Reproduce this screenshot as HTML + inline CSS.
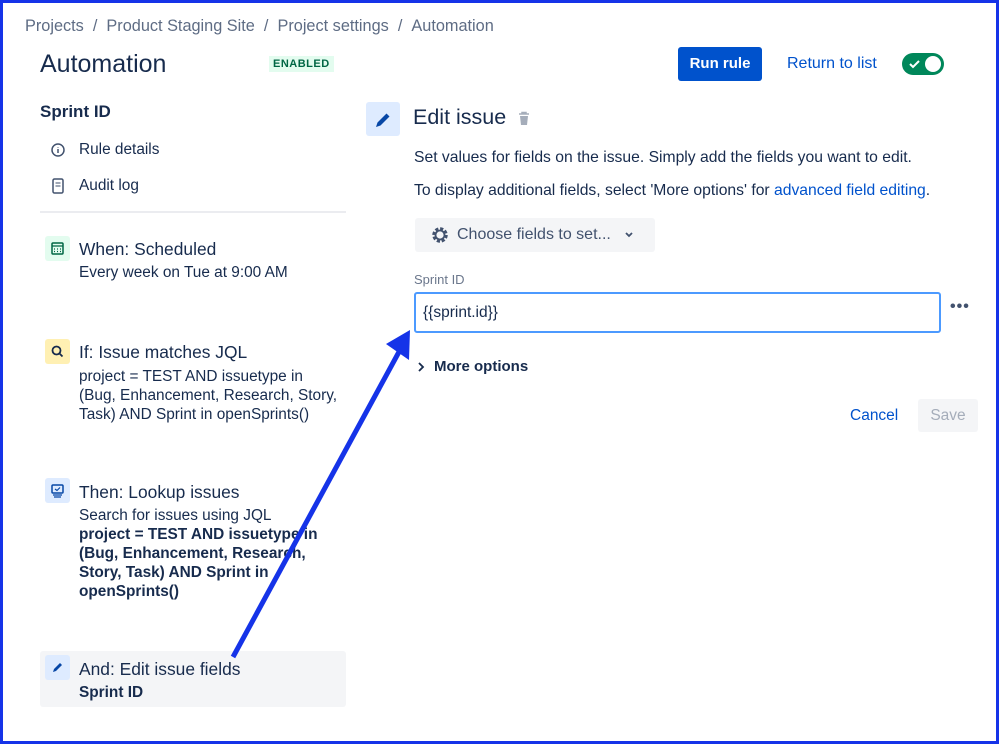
<!DOCTYPE html>
<html><head><style>
*{margin:0;padding:0;box-sizing:border-box}
body{width:999px;height:744px;overflow:hidden;background:#fff;font-family:"Liberation Sans",sans-serif;color:#172b4d;position:relative}
.frame{position:absolute;left:0;top:0;width:999px;height:744px;border:3px solid #1533e8}
.a{position:absolute;white-space:nowrap}
.ic{position:absolute;width:25px;height:25px;border-radius:3px}
</style></head><body>
<div class="frame"></div>
<div class="a" style="left:25px;top:17px;font-size:16.3px;color:#5e6c84">Projects &nbsp;/ &nbsp;Product Staging Site &nbsp;/ &nbsp;Project settings &nbsp;/ &nbsp;Automation</div>
<div class="a" style="left:40px;top:50px;font-size:25px;color:#172b4d">Automation</div>
<div class="a" style="left:269px;top:56px;background:#e3fcef;color:#006644;font-size:11px;font-weight:bold;padding:2px 4px;letter-spacing:.5px">ENABLED</div>
<div class="a" style="left:678px;top:47px;width:84px;height:34px;background:#0052cc;color:#fff;border-radius:3px;font-size:15px;font-weight:bold;text-align:center;line-height:34px">Run rule</div>
<div class="a" style="left:787px;top:55px;font-size:16px;color:#0052cc">Return to list</div>
<div class="a" style="left:902px;top:53px;width:42px;height:22px;border-radius:11px;background:#00875a"><svg width="42" height="22"><path d="M8 11l3 3 6-6" stroke="#fff" stroke-width="2" fill="none"/><circle cx="31" cy="11" r="8" fill="#fff"/></svg></div>

<div class="a" style="left:40px;top:102px;font-size:17px;font-weight:bold">Sprint ID</div>
<svg class="a" style="left:50px;top:142px" width="16" height="16"><circle cx="8" cy="8" r="6" fill="none" stroke="#42526e" stroke-width="1.5"/><path d="M8 7v4M8 5v.5" stroke="#42526e" stroke-width="1.5"/></svg>
<div class="a" style="left:79px;top:141px;font-size:15.4px">Rule details</div>
<svg class="a" style="left:52px;top:178px" width="12" height="16"><rect x="1" y="1" width="10" height="14" rx="1.5" fill="none" stroke="#42526e" stroke-width="1.5"/><path d="M3.5 5h5M3.5 8h5" stroke="#42526e"/></svg>
<div class="a" style="left:79px;top:177px;font-size:15.4px">Audit log</div>
<div class="a" style="left:40px;top:211px;width:306px;height:2px;background:#ebecf0"></div>

<div class="ic" style="left:45px;top:236px;background:#e3fcef"><svg width="25" height="25"><rect x="7" y="7" width="11" height="11" rx="1" fill="none" stroke="#006644" stroke-width="1.5"/><path d="M7 10h11M9 13h1M12 13h1M15 13h1M9 15.5h1M12 15.5h1M15 15.5h1" stroke="#006644" stroke-width="1.3"/></svg></div>
<div class="a" style="left:79px;top:239px;font-size:17.4px">When: Scheduled</div>
<div class="a" style="left:79px;top:264px;font-size:15.4px">Every week on Tue at 9:00 AM</div>

<div class="ic" style="left:45px;top:339px;background:#fff0b3"><svg width="25" height="25"><circle cx="11.5" cy="11.5" r="4" fill="none" stroke="#172b4d" stroke-width="1.8"/><path d="M14.5 14.5l3 3" stroke="#172b4d" stroke-width="1.8"/></svg></div>
<div class="a" style="left:79px;top:342px;font-size:17.4px">If: Issue matches JQL</div>
<div class="a" style="left:79px;top:367px;font-size:15.4px;line-height:19px">project = TEST AND issuetype in<br>(Bug, Enhancement, Research, Story,<br>Task) AND Sprint in openSprints()</div>

<div class="ic" style="left:45px;top:478px;background:#deebff"><svg width="25" height="25"><rect x="7" y="7" width="11" height="8" rx="1" fill="none" stroke="#0747a6" stroke-width="1.5"/><path d="M10 11l2 1.5 3-3M8 17h9M9 19h7" stroke="#0747a6" stroke-width="1.2" fill="none"/></svg></div>
<div class="a" style="left:79px;top:482px;font-size:17.4px">Then: Lookup issues</div>
<div class="a" style="left:79px;top:506px;font-size:15.4px;line-height:19px">Search for issues using JQL<br><b>project = TEST AND issuetype in<br>(Bug, Enhancement, Research,<br>Story, Task) AND Sprint in<br>openSprints()</b></div>

<div class="a" style="left:40px;top:651px;width:306px;height:56px;background:#f4f5f7;border-radius:3px"></div>
<div class="ic" style="left:45px;top:655px;background:#deebff"><svg width="25" height="25"><path d="M8 17l1-3 6-6 2 2-6 6z" fill="#0747a6"/></svg></div>
<div class="a" style="left:79px;top:659px;font-size:17.4px">And: Edit issue fields</div>
<div class="a" style="left:79px;top:684px;font-size:15.4px;font-weight:bold">Sprint ID</div>

<div class="ic" style="left:366px;top:102px;width:34px;height:34px;background:#deebff"><svg width="34" height="34"><path d="M10 25l1.5-4.5 9-9 3 3-9 9z" fill="#0747a6"/></svg></div>
<div class="a" style="left:413px;top:105px;font-size:21.5px">Edit issue</div>
<svg class="a" style="left:517px;top:111px" width="14" height="16"><path d="M2 3h10M5 3V1.5h4V3" stroke="#a5adba" stroke-width="1.5" fill="none"/><path d="M3 5h8l-1 9H4z" fill="#a5adba"/></svg>
<div class="a" style="left:414px;top:149px;font-size:15.7px">Set values for fields on the issue. Simply add the fields you want to edit.</div>
<div class="a" style="left:414px;top:182px;font-size:15.7px">To display additional fields, select 'More options' for <span style="color:#0052cc">advanced field editing</span>.</div>
<div class="a" style="left:415px;top:218px;width:240px;height:34px;background:#f4f5f7;border-radius:3px"></div>
<svg class="a" style="left:429px;top:224px" width="22" height="22"><circle cx="11" cy="11" r="6" fill="none" stroke="#42526e" stroke-width="3.5" stroke-dasharray="3 1.7"/><circle cx="11" cy="11" r="4.5" fill="none" stroke="#42526e" stroke-width="1.8"/></svg>
<div class="a" style="left:457px;top:226px;font-size:16px;color:#42526e">Choose fields to set...</div>
<svg class="a" style="left:624px;top:230px" width="10" height="10"><path d="M2 3l3 3 3-3" stroke="#42526e" stroke-width="1.8" fill="none"/></svg>
<div class="a" style="left:414px;top:272px;font-size:13px;color:#6b778c">Sprint ID</div>
<div class="a" style="left:414px;top:292px;width:527px;height:41px;border:2px solid #4c9aff;border-radius:3px;font-size:15.5px;padding:10px 7px">{{sprint.id}}</div>
<div class="a" style="left:950px;top:298px;font-size:16px;color:#42526e;font-weight:bold;letter-spacing:1px">•••</div>
<svg class="a" style="left:416px;top:360px" width="10" height="14"><path d="M3 3l4 4-4 4" stroke="#172b4d" stroke-width="1.8" fill="none"/></svg>
<div class="a" style="left:434px;top:358px;font-size:15px;font-weight:bold">More options</div>
<div class="a" style="left:850px;top:407px;font-size:15.5px;color:#0052cc">Cancel</div>
<div class="a" style="left:918px;top:399px;width:60px;height:33px;background:#f4f5f7;border-radius:3px;font-size:15.5px;color:#a5adba;text-align:center;line-height:33px">Save</div>

<svg class="a" style="left:0;top:0" width="999" height="744"><path d="M233 657L400 350" stroke="#1533e8" stroke-width="5"/><polygon points="410,330 386,344 409,360" fill="#1533e8"/></svg>
</body></html>
